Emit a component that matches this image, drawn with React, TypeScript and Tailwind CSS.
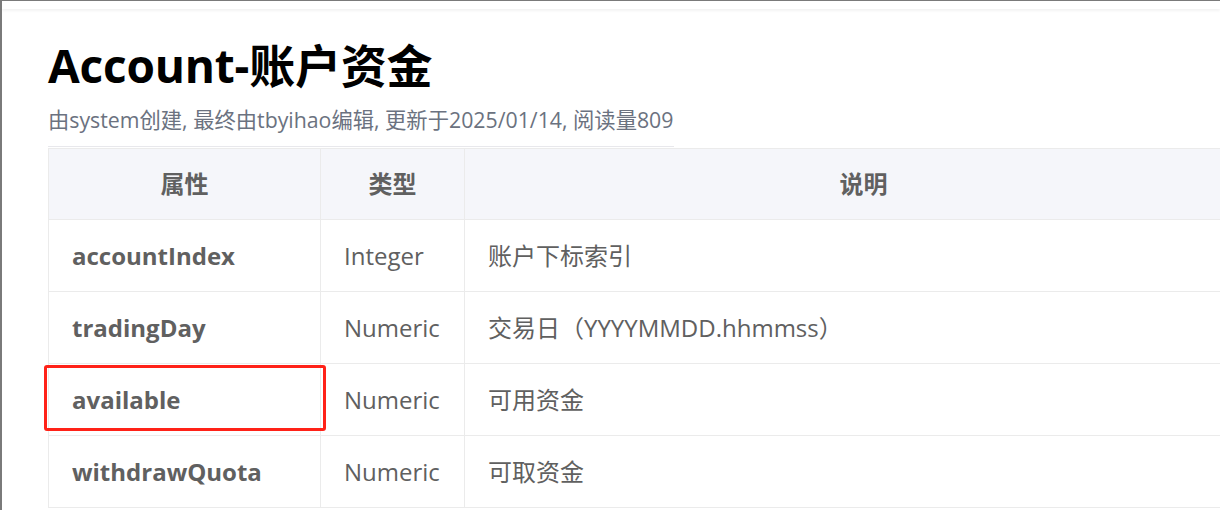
import React from 'react';

const rows = [
    { name: 'accountIndex', type: 'Integer', desc: '账户下标索引' },
    { name: 'tradingDay', type: 'Numeric', desc: '交易日（YYYYMMDD.hhmmss）' },
    { name: 'available', type: 'Numeric', desc: '可用资金' },
    { name: 'withdrawQuota', type: 'Numeric', desc: '可取资金' },
];

const font = 'font-["Open_Sans","Noto_Sans_CJK_SC",sans-serif]';

export default function App() {
    return (
        <div className={`relative w-[1220px] h-[510px] overflow-hidden bg-white border-t border-l-2 border-[#7a7a7a] ${font}`}>
            <div className="h-[8px] shadow-[0_2px_3px_rgba(0,0,0,0.05)]" />

            <div className="pl-[46px]">
                <h1 className="mt-[26px] text-[46px] leading-[60px] font-bold text-black tracking-[-0.2px]">
                    Account-账户资金
                </h1>
                <p className="mt-[12px] text-[21.3px] leading-[26px] text-[#6b7280]">
                    由system创建, 最终由tbyihao编辑, 更新于2025/01/14, 阅读量809
                </p>
                <div className="mt-[13px] h-px w-[626px] bg-[#e8e8ec]" />

                <table className="mt-px w-[1214px] table-fixed border-collapse text-[24px]">
                    <colgroup>
                        <col className="w-[272px]" />
                        <col className="w-[144px]" />
                        <col className="w-[798px]" />
                    </colgroup>
                    <thead>
                        <tr className="h-[71px] bg-[#f5f6fa]">
                            <th className="border border-[#ebebeb] font-bold text-[#606060] text-center">属性</th>
                            <th className="border border-[#ebebeb] font-bold text-[#606060] text-center">类型</th>
                            <th className="border border-[#ebebeb] font-bold text-[#606060] text-center">说明</th>
                        </tr>
                    </thead>
                    <tbody>
                        {rows.map((r) => (
                            <tr key={r.name} className="h-[72px]">
                                <td className="border border-[#ebebeb] px-[23px] font-bold text-[#606060]">{r.name}</td>
                                <td className="border border-[#ebebeb] px-[23px] text-[#606060]">{r.type}</td>
                                <td className="border border-[#ebebeb] px-[23px] text-[#606060]">{r.desc}</td>
                            </tr>
                        ))}
                    </tbody>
                </table>
            </div>

            <div className="absolute left-[42px] top-[364px] w-[282px] h-[66px] border-[3px] border-[#ff2218] rounded-[3px]" />
        </div>
    );
}
